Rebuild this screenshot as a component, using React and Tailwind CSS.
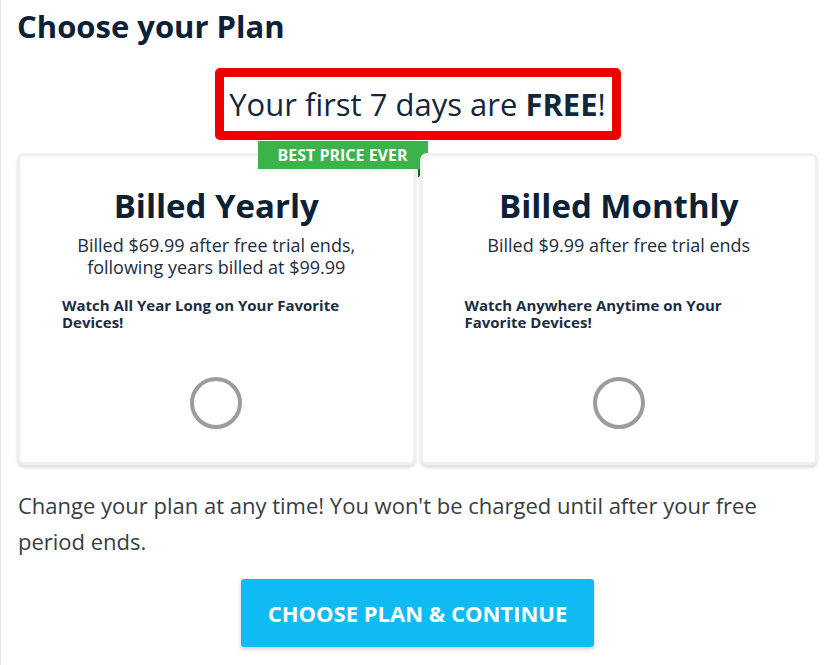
export default function App() {
  return (
    <div
      className="min-h-[665px] w-[837px] border-l border-[#e4e4e4] bg-white text-[#0e2239]"
      style={{ fontFamily: '"Open Sans", "Liberation Sans", sans-serif' }}
    >
      <div className="pl-[16px] pr-[19px] pt-[6px]">
        <h1 className="text-[31px] font-bold leading-[40px] text-[#0c2036]">Choose your Plan</h1>

        <div className="mt-[22px] flex justify-center">
          <div className="flex h-[72px] w-[406px] items-center justify-center rounded-[5px] border-[9px] border-[#ee0000]">
            <span className="text-[31px] leading-none text-[#14263b]">
              Your first 7 days are <b className="font-bold">FREE</b>!
            </span>
          </div>
        </div>

        <div className="mt-[13px] grid grid-cols-2 gap-[4px]">
          <PlanCard
            title="Billed Yearly"
            lines={["Billed $69.99 after free trial ends,", "following years billed at $99.99"]}
            perk="Watch All Year Long on Your Favorite Devices!"
            badge
          />
          <PlanCard
            title="Billed Monthly"
            lines={["Billed $9.99 after free trial ends"]}
            perk="Watch Anywhere Anytime on Your Favorite Devices!"
          />
        </div>

        <p className="mt-[22px] pl-[1px] text-[22px] leading-[36px] text-[#383d42]">
          Change your plan at any time! You won't be charged until after your free period ends.
        </p>

        <div className="mt-[20px] flex justify-center">
          <button className="h-[68px] w-[353px] rounded-[3px] bg-[#10bbf3] text-[22px] font-bold text-white shadow-[0_2px_4px_rgba(0,0,0,0.2)]">
            CHOOSE PLAN &amp; CONTINUE
          </button>
        </div>
      </div>
    </div>
  );
}

function PlanCard({ title, lines, perk, badge }) {
  return (
    <div className="relative h-[312px] rounded-[7px] border-[3px] border-[#f0f0f0] bg-white shadow-[0_3px_3px_rgba(0,0,0,0.12)]">
      {badge && (
        <div className="absolute right-[-15px] top-[-15px]">
          <div className="flex h-[28px] w-[170px] items-center justify-center bg-[#3cb24a] text-[16px] font-bold text-white">
            BEST PRICE EVER
          </div>
          <div className="ml-auto h-[9px] w-[10px] bg-[#146b22] [clip-path:polygon(0_0,100%_0,0_100%)]" />
        </div>
      )}
      <div className="flex flex-col items-center pt-[28px]">
        <h2 className="text-[33px] font-bold leading-[44px] text-[#0c2036]">{title}</h2>
        <div className="mt-[6px] text-center text-[18px] leading-[22px] text-[#1c2d40]">
          {lines.map((l) => (
            <div key={l}>{l}</div>
          ))}
        </div>
      </div>
      <p className={`px-[42px] text-[15px] font-bold leading-[17px] text-[#1c2d40] ${lines.length > 1 ? "mt-[19px]" : "mt-[41px]"}`}>
        {perk}
      </p>
      <div className="absolute left-1/2 top-[221px] h-[52px] w-[52px] -translate-x-1/2 rounded-full border-[4px] border-[#9c9c9c]" />
    </div>
  );
}
